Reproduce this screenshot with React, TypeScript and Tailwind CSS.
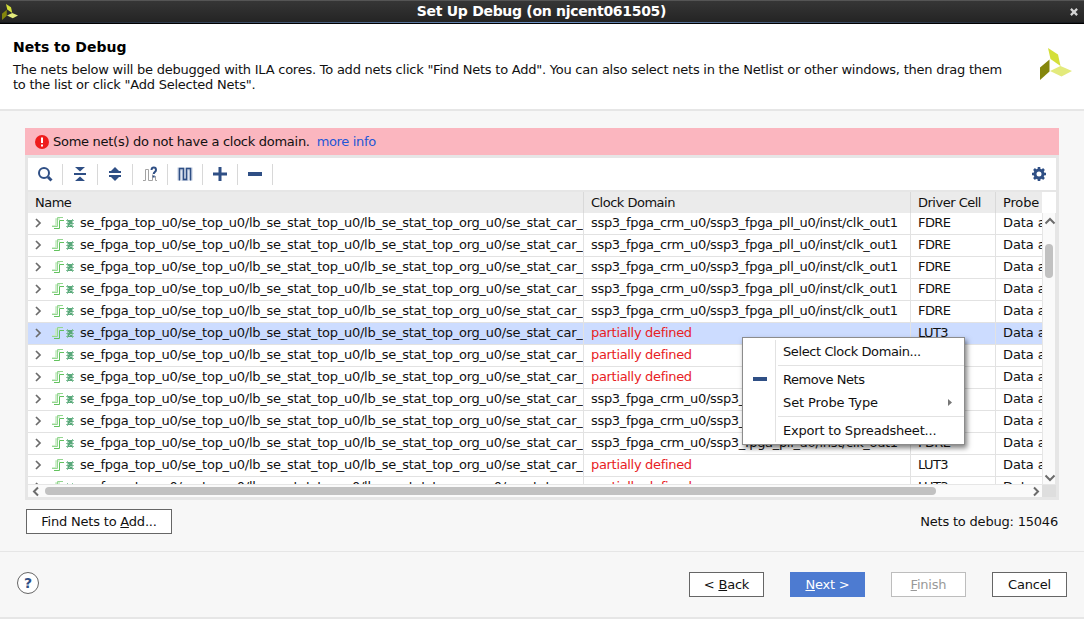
import type { ReactNode } from "react";

const NET = "se_fpga_top_u0/se_top_u0/lb_se_stat_top_u0/lb_se_stat_top_org_u0/se_stat_car_";
const CLOCK = "ssp3_fpga_crm_u0/ssp3_fpga_pll_u0/inst/clk_out1";

const rows = [
  { clock: CLOCK, cell: "FDRE" },
  { clock: CLOCK, cell: "FDRE" },
  { clock: CLOCK, cell: "FDRE" },
  { clock: CLOCK, cell: "FDRE" },
  { clock: CLOCK, cell: "FDRE" },
  { clock: null, cell: "LUT3", selected: true },
  { clock: null, cell: "LUT3" },
  { clock: null, cell: "LUT3" },
  { clock: CLOCK, cell: "FDRE" },
  { clock: CLOCK, cell: "FDRE" },
  { clock: CLOCK, cell: "FDRE" },
  { clock: null, cell: "LUT3" },
  { clock: null, cell: "LUT3" },
];

function Logo({ className }: { className: string }) {
  return (
    <svg className={className} viewBox="0 0 32 32">
      <path d="M8 0 18 6.500 20.500 18 10.500 11z" fill="#d4df3a" />
      <path d="M0 19.500 9.500 11.500V23.500L0 32z" fill="#84860c" />
      <path d="M10 23 20.500 18 32 23 21.500 28.500z" fill="#e3ea7c" />
    </svg>
  );
}

function Chevron({ d, className }: { d: string; className: string }) {
  return (
    <svg className={className} viewBox="0 0 12 12" fill="none" stroke="#6b6b6b">
      <path d={d} />
    </svg>
  );
}

function NetIcon() {
  return (
    <svg className="mb-[2px] ml-2 h-3 w-6 shrink-0" viewBox="0 0 24 12" fill="none">
      <path d="M0 9H4V2H8" stroke="#c4eac0" strokeWidth="1.500" />
      <path d="M2 11.500H7.500V3.500H12" stroke="#62c25e" />
      <path d="M0 9.500H5.500V0.500H11" stroke="#94d690" />
      <path
        d="M14 3.500H16M20 3.500H22M14 6.500H22M14 9.500H16M20 9.500H22M15.500 2V4M20.500 2V4M15.500 9V11M20.500 9V11"
        stroke="#8ac7a0"
      />
      <rect x="15.500" y="3" width="5" height="7" fill="#5aa87b" />
      <path d="M16 5.500H17M18 7.500H20M17 8.500H18" stroke="#a9d8bb" />
    </svg>
  );
}

function ToolButton({ children }: { children: ReactNode }) {
  return (
    <div className="flex h-[21px] w-[35px] items-center justify-center border-r border-[#d8d8d8]">
      <svg className="h-4 w-4" viewBox="0 0 16 16" fill="none" stroke="#2f4f85">
        {children}
      </svg>
    </div>
  );
}

function Toolbar() {
  return (
    <div className="flex h-8 items-center bg-white">
      <ToolButton>
        <circle cx="7" cy="7" r="5" strokeWidth="2" />
        <path d="M11 11 14.500 14.500" strokeWidth="3" />
      </ToolButton>
      <ToolButton>
        <path d="M2 8H14" strokeWidth="2" />
        <path d="M3 1H13L8 5.500zM3 15H13L8 10.500z" fill="#2f4f85" stroke="none" />
      </ToolButton>
      <ToolButton>
        <path d="M2 6H14M2 10H14" strokeWidth="2" />
        <path d="M4 5H12L8 1zM4 11H12L8 15z" fill="#2f4f85" stroke="none" />
      </ToolButton>
      <ToolButton>
        <path d="M1 14.500H3.500V3.500H6.500V14.500H10.500V8.500M13.500 10V14.500H15" stroke="#a3a3a3" />
        <path d="M9.500 4C9.700 0.800 14 0.800 14 4C14 6 11.700 6 11.700 8M11.700 9.500V11.500" strokeWidth="2" />
      </ToolButton>
      <ToolButton>
        <path d="M2 14.500V3H6V13.500H10V3H14V14.500" stroke="#c3cde0" strokeWidth="3" />
        <path d="M2.500 14.500V2.500H6.500V13.500H9.500V2.500H13.500V14.500" strokeWidth="1.500" />
      </ToolButton>
      <ToolButton>
        <path d="M1 8H15M8 1V15" strokeWidth="3" />
      </ToolButton>
      <ToolButton>
        <path d="M1 8H15" strokeWidth="4" />
      </ToolButton>
      <svg className="mr-[9px] ml-auto h-4 w-4" viewBox="0 0 16 16" fill="none" stroke="#2f4f85">
        <circle cx="8" cy="8" r="4" strokeWidth="3" />
        <path
          d="M8 1V3M8 13V15M1 8H3M13 8H15M3 3 4.500 4.500M11.500 11.500 13 13M3 13 4.500 11.500M11.500 4.500 13 3"
          strokeWidth="2.600"
        />
      </svg>
    </div>
  );
}

function NetsTable() {
  return (
    <div className="w-[1014px] overflow-hidden">
      <div className="flex h-[21px] bg-[#ebebeb] leading-[21px] tracking-[-0.5px]">
        <div className="w-[556px] shrink-0 border-r border-[#d9d9d9] pl-[7px]">Name</div>
        <div className="w-[327px] shrink-0 border-r border-[#d9d9d9] pl-[7px]">Clock Domain</div>
        <div className="w-[85px] shrink-0 border-r border-[#d9d9d9] pl-[7px]">Driver Cell</div>
        <div className="pl-[7px] tracking-[-0.15px]">Probe</div>
      </div>
      <div className="h-[271px] overflow-hidden bg-white">
        {rows.map((row, i) => (
          <div
            key={i}
            className={`flex h-[22px] border-b border-[#e2e2e2] leading-[20px] tracking-[-0.32px] whitespace-nowrap ${row.selected ? "bg-[#ccdcff]" : ""}`}
          >
            <div className="flex w-[556px] shrink-0 items-center overflow-hidden border-r border-[#e2e2e2] pl-1">
              <Chevron className="mb-px h-3 w-3 shrink-0 stroke-[1.7]" d="M4 2 8 6 4 10" />
              <NetIcon />
              <span className="ml-1 h-[21px] tracking-[-0.26px]">{NET}</span>
            </div>
            <div
              className={`w-[327px] shrink-0 border-r border-[#e2e2e2] pl-[7px] ${row.clock ? "" : "text-[#e81c24]"}`}
            >
              {row.clock ?? "partially defined"}
            </div>
            <div className="w-[85px] shrink-0 border-r border-[#e2e2e2] pl-[7px] tracking-[-0.6px]">{row.cell}</div>
            <div className="pl-[7px] tracking-[-0.1px]">Data a</div>
          </div>
        ))}
      </div>
    </div>
  );
}

function VerticalScrollbar() {
  return (
    <div className="mt-[21px] flex h-[271px] w-[14px] flex-col items-center border-x border-[#e6e6e6] bg-[#fafafa]">
      <Chevron className="mt-[2px] ml-px h-3 w-3 shrink-0 stroke-2" d="M1.500 8.500 6 4 10.500 8.500" />
      <div className="mt-[17px] h-[34px] w-2 rounded-full bg-[#c1c1c1]" />
      <Chevron className="mt-auto ml-px h-3 w-3 shrink-0 stroke-2" d="M1.500 3.500 6 8 10.500 3.500" />
    </div>
  );
}

function HorizontalScrollbar() {
  return (
    <div className="flex h-[13px] border-t border-[#e6e6e6]">
      <div className="flex w-[1014px] items-center bg-[#fafafa]">
        <Chevron className="ml-[2px] h-3 w-3 stroke-2" d="M8 2.500 4 6.500 8 10.500" />
        <div className="ml-[3px] h-2 w-[891px] rounded-full bg-[#c1c1c1]" />
        <Chevron className="ml-auto h-3 w-3 stroke-2" d="M4 2.500 8 6.500 4 10.500" />
      </div>
      <div className="w-[14px] bg-[#dedede]" />
    </div>
  );
}

function ContextMenu() {
  return (
    <div className="absolute top-[337px] left-[742px] flex h-[108px] w-[223px] border border-[#8c8c8c] bg-white shadow-[2px_3px_5px_rgba(0,0,0,0.5)]">
      <div className="my-[2px] w-[33px] border-r border-[#e2e2e2]">
        <div className="mt-[37px] ml-[10px] h-1 w-[14px] bg-[#2f4f85]" />
      </div>
      <div className="ml-[2px] flex-1 leading-[23px]">
        <div className="mt-[2px] pl-[5px] tracking-[-0.4px]">Select Clock Domain...</div>
        <div className="my-[2px] border-t border-[#e2e2e2]" />
        <div className="pl-[5px] tracking-[-0.45px]">Remove Nets</div>
        <div className="flex items-center pr-3 pl-[5px] tracking-[-0.1px]">
          Set Probe Type
          <svg className="ml-auto h-[7px] w-1" viewBox="0 0 4 7">
            <path d="M0 0 4 3.500 0 7z" fill="#777" />
          </svg>
        </div>
        <div className="my-[2px] border-t border-[#e2e2e2]" />
        <div className="pl-[5px] tracking-[-0.2px]">Export to Spreadsheet...</div>
      </div>
    </div>
  );
}

function Button({ className, children }: { className: string; children: ReactNode }) {
  return (
    <button className={`h-[25px] border leading-[23px] tracking-[-0.2px] ${className}`}>
      {children}
    </button>
  );
}

export default function App() {
  return (
    <div className="relative h-[619px] w-[1084px] overflow-hidden bg-[#f7f7f7] font-['DejaVu_Sans',sans-serif] text-[13px] text-[#111]">
      <div className="border-b border-black bg-linear-to-r from-[#16191e] via-[#7096cc] to-[#16191e] pb-px">
        <div className="flex h-[22px] items-center justify-between border-t border-[#555] bg-linear-to-b from-[#363636] to-[#242424] pr-[6px] pl-[2px] text-white">
          <Logo className="h-4 w-4" />
          <h1 className="mr-[5px] mb-[2px] text-sm font-bold tracking-[-0.3px]">Set Up Debug (on njcent061505)</h1>
          <svg className="h-[8px] w-[8px]" viewBox="0 0 9 9" stroke="#d4d4d4" strokeWidth="2.500">
            <path d="M1 1 8 8M8 1 1 8" />
          </svg>
        </div>
      </div>

      <header className="flex h-[87px] justify-between border-b-2 border-[#e6e6e6] bg-white pr-3 pl-[13px]">
        <div>
          <h2 className="mt-[13px] text-sm leading-5 font-bold text-black">Nets to Debug</h2>
          <p className="mt-[5px] leading-[15px] tracking-[-0.235px] whitespace-nowrap">
            The nets below will be debugged with ILA cores. To add nets click "Find Nets to Add". You can also select nets in the Netlist or other windows, then drag them
            <br />
            to the list or click "Add Selected Nets".
          </p>
        </div>
        <Logo className="mt-6 h-8 w-8 shrink-0" />
      </header>

      <main className="mx-[25px] mt-[17px]">
        <div className="flex h-[27px] items-center bg-[#fbb6bf] pl-[10px] tracking-[-0.28px]">
          <svg className="h-[14px] w-[14px]" viewBox="0 0 14 14">
            <circle cx="7" cy="7" r="7" fill="#ee1c1c" />
            <path d="M7 2.500V8M7 9.500V11.500" stroke="#fff" strokeWidth="2" />
          </svg>
          <span className="ml-1">Some net(s) do not have a clock domain.</span>
          <a href="#" className="ml-[7px] tracking-[-0.35px] text-[#2457d6]">more info</a>
        </div>
        <div className="h-[345px] border-[3px] border-[#e6e6e6] bg-white">
          <Toolbar />
          <div className="flex border-t-2 border-[#e6e6e6]">
            <NetsTable />
            <VerticalScrollbar />
          </div>
          <HorizontalScrollbar />
        </div>
        <div className="mt-[9px] flex items-center justify-between pr-[1px] pl-[1px]">
          <Button className="w-[146px] border-[#666] bg-white">
            Find Nets to <u>A</u>dd...
          </Button>
          <span className="tracking-[-0.2px]">Nets to debug: 15046</span>
        </div>
      </main>

      <footer className="mt-[17px] flex h-[68px] items-center border-t border-b-2 border-[#e6e6e6] pr-[17px] pl-[17px]">
        <div className="mb-[3px] flex h-[22px] w-[22px] items-center justify-center rounded-full border border-[#666] bg-white text-sm font-bold text-[#2f4f85]">
          ?
        </div>
        <div className="ml-auto flex gap-[26px]">
          <Button className="w-[75px] border-[#666] bg-white">&lt; <u>B</u>ack</Button>
          <Button className="w-[75px] border-[#4d7bd1] bg-[#4d7bd1] text-white"><u>N</u>ext &gt;</Button>
          <Button className="w-[75px] border-[#bdbdbd] bg-white text-[#999]"><u>F</u>inish</Button>
          <Button className="w-[75px] border-[#666] bg-white">Cancel</Button>
        </div>
      </footer>

      <ContextMenu />
    </div>
  );
}
